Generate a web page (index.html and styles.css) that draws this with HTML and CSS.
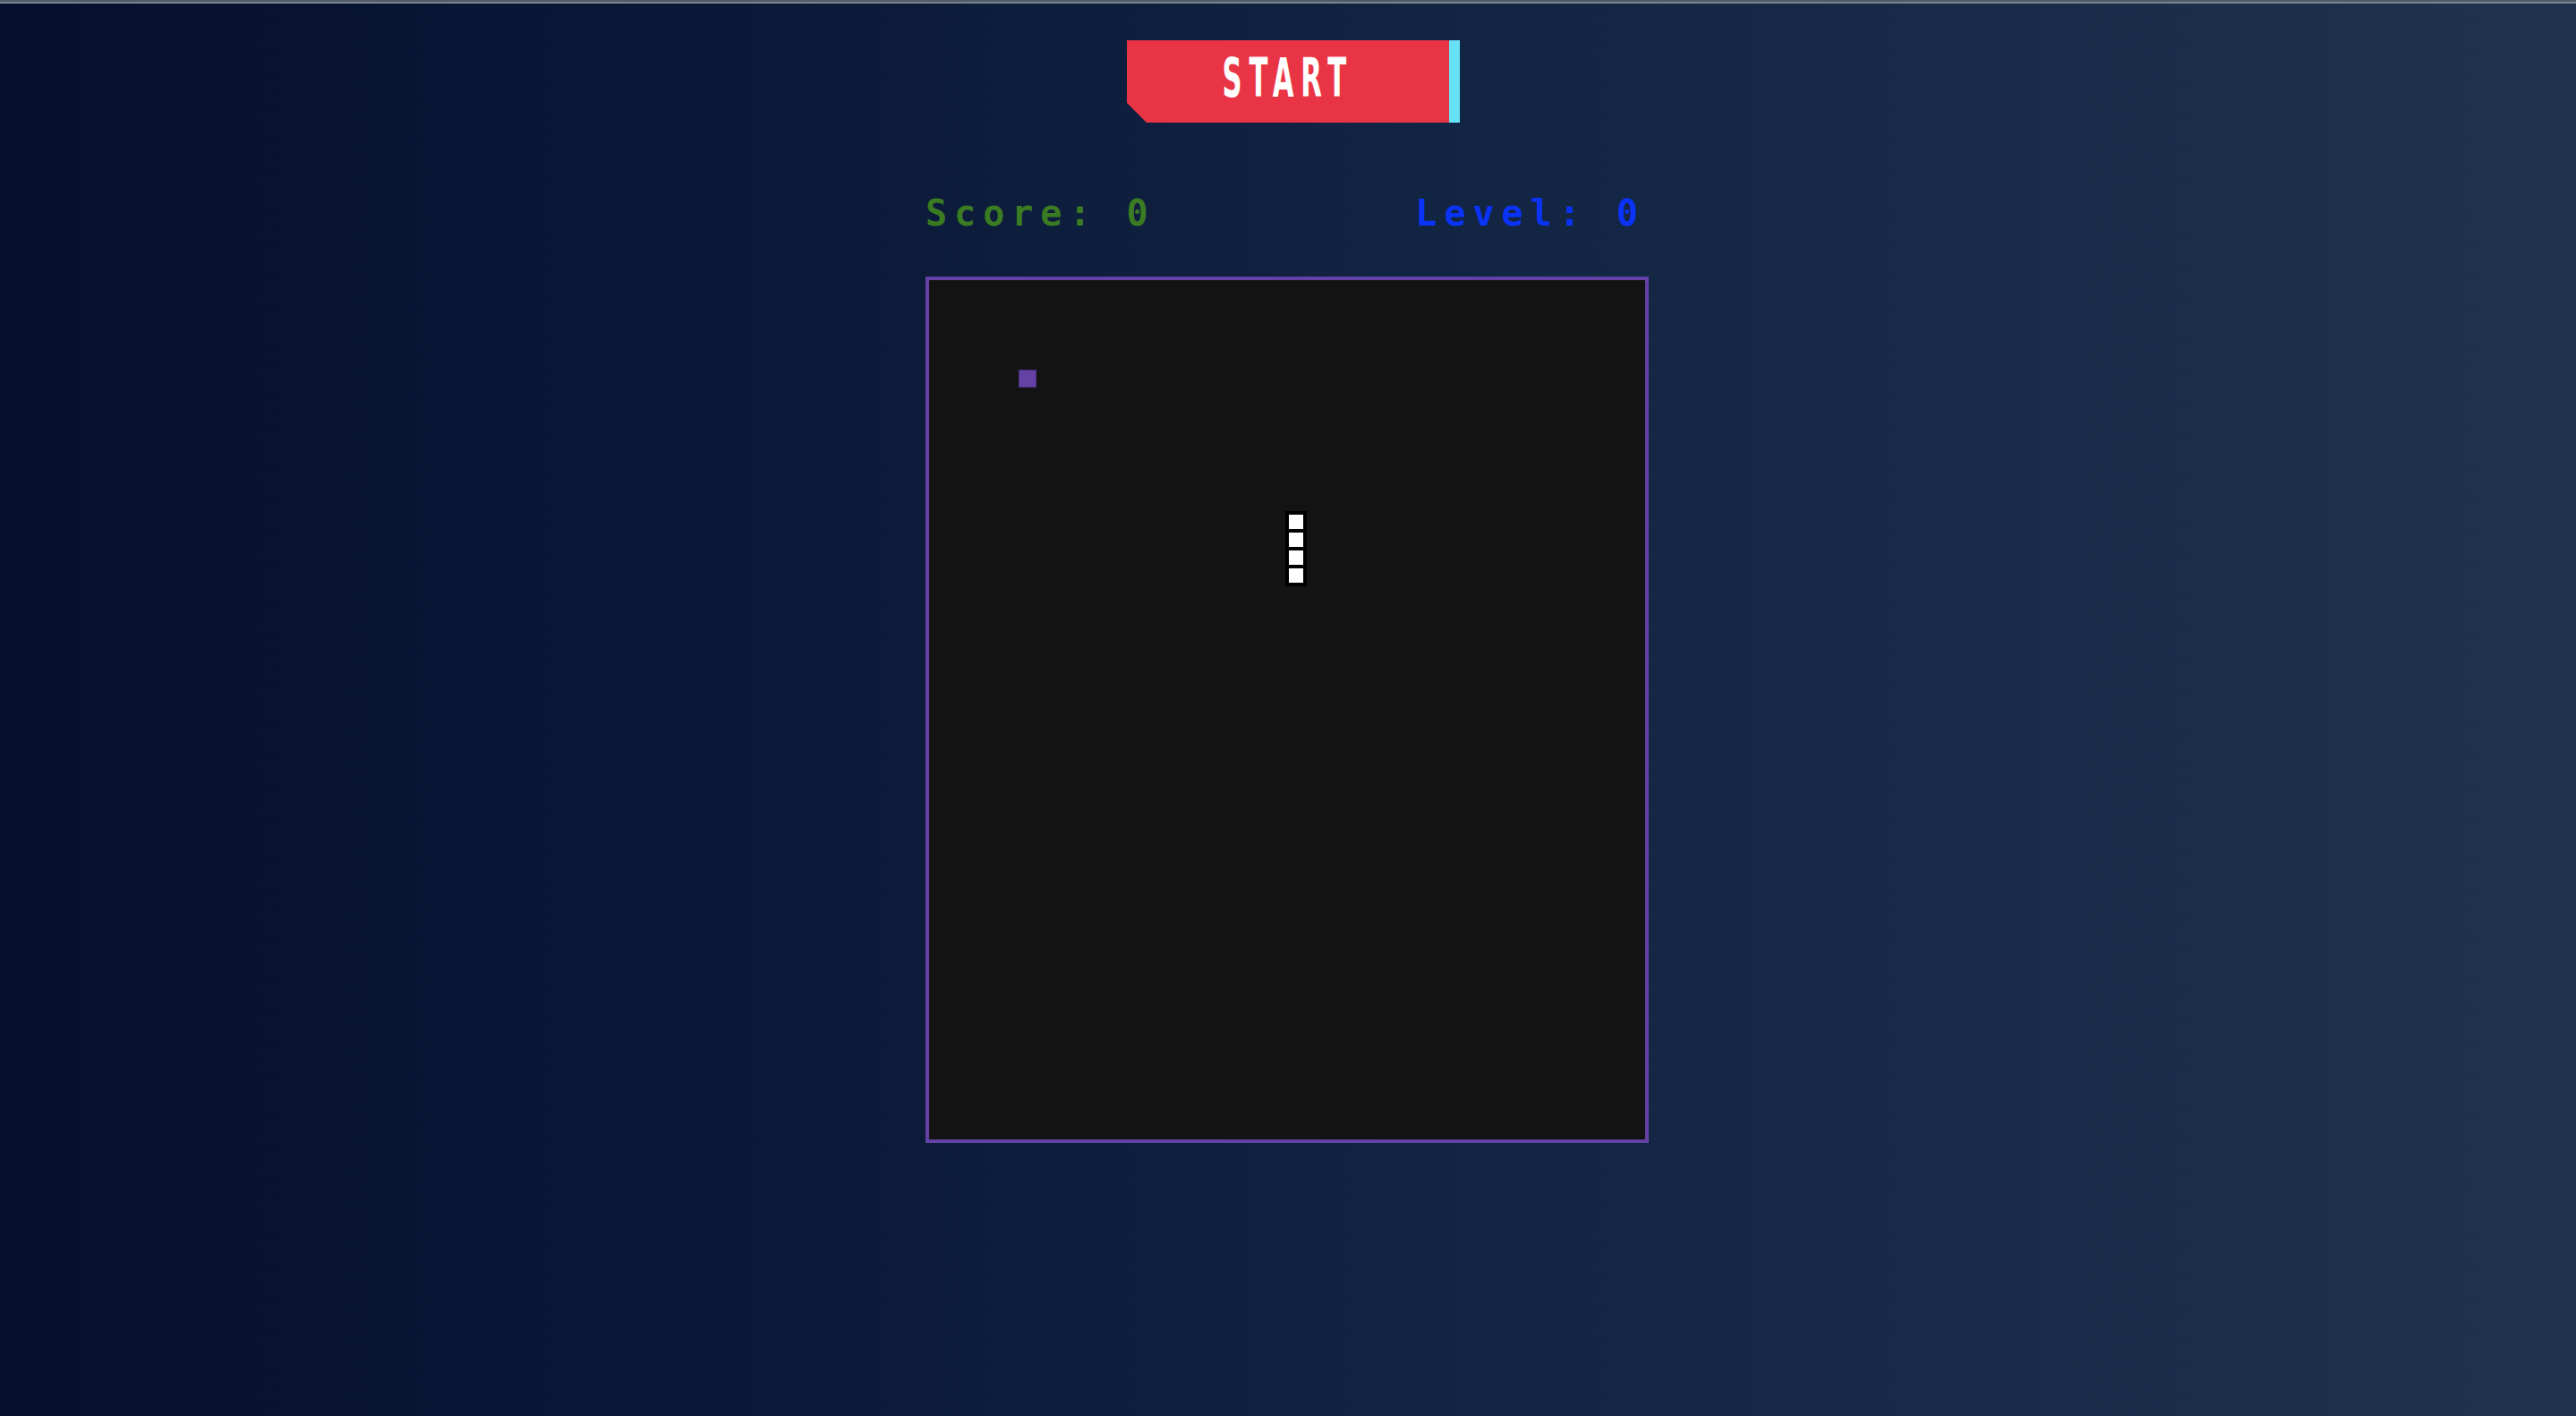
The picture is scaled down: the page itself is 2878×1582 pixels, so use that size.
FILE: index.html
```html
<!DOCTYPE html>
<html lang="en">
<head>
<meta charset="utf-8">
<title>Snake</title>
<link rel="stylesheet" href="styles.css">
</head>
<body>
<div class="topline"></div>
<main class="game">
  <div class="start-wrap">
    <button class="start-btn"><span class="start-label">START</span></button>
  </div>
  <div class="stats">
    <span class="score">Score: 0</span>
    <span class="level">Level: 0</span>
  </div>
  <div class="board">
    <div class="food" style="left:100px;top:100px"></div>
    <div class="seg" style="left:400px;top:260px"></div>
    <div class="seg" style="left:400px;top:280px"></div>
    <div class="seg" style="left:400px;top:300px"></div>
    <div class="seg" style="left:400px;top:320px"></div>
  </div>
</main>
</body>
</html>
```
FILE: styles.css
```css
html, body {
  margin: 0;
  padding: 0;
}
body {
  min-height: 100vh;
  background: linear-gradient(to right, #060f2e 0%, #0c1b3a 35%, #112442 55%, #1f334f 100%);
  font-family: "DejaVu Sans Mono", monospace;
}
.topline {
  height: 2px;
  background: #525c66;
  border-bottom: 2px solid #7a848e;
}
.game {
  display: flex;
  flex-direction: column;
  align-items: center;
}
.start-wrap {
  position: relative;
  width: 360px;
  height: 92px;
  margin-top: 41px;
}
.start-wrap::after {
  content: "";
  position: absolute;
  top: 0;
  bottom: 0;
  right: -12px;
  width: 12px;
  background: #66e1f5;
}
.start-btn {
  display: flex;
  align-items: center;
  justify-content: center;
  width: 100%;
  height: 100%;
  border: 0;
  padding: 0 0 8px 0;
  margin: 0;
  background: #e93445;
  clip-path: polygon(0 0, 100% 0, 100% 100%, 22px 100%, 0 70px);
  cursor: pointer;
}
.start-label {
  display: inline-block;
  font-family: "DejaVu Sans", sans-serif;
  font-stretch: condensed;
  font-weight: 700;
  font-size: 61px;
  line-height: 60px;
  letter-spacing: 14px;
  color: #ffffff;
  transform: translateX(0px) scaleX(0.56);
}
.stats {
  display: flex;
  justify-content: space-between;
  width: 808px;
  margin-top: 81px;
  margin-right: 2px;
  height: 40px;
  font-family: "DejaVu Sans Mono", monospace;
  font-weight: 700;
  font-size: 40px;
  line-height: 40px;
  letter-spacing: 8px;
}
.score {
  color: #3b7c22;
}
.level {
  color: #0a33fa;
  padding-right: 4px;
}
.board {
  position: relative;
  width: 800px;
  height: 960px;
  margin-top: 51px;
  margin-right: 2px;
  border: 4px solid #6441a5;
  background: #131313;
}
.food {
  position: absolute;
  width: 20px;
  height: 20px;
  box-sizing: border-box;
  background: #6441a5;
  border: 1px solid #4e3184;
}
.seg {
  position: absolute;
  width: 20px;
  height: 20px;
  box-sizing: border-box;
  background: #ffffff;
  border: 2px solid #000000;
  box-shadow: 0 0 0 2px #000000;
}
```
